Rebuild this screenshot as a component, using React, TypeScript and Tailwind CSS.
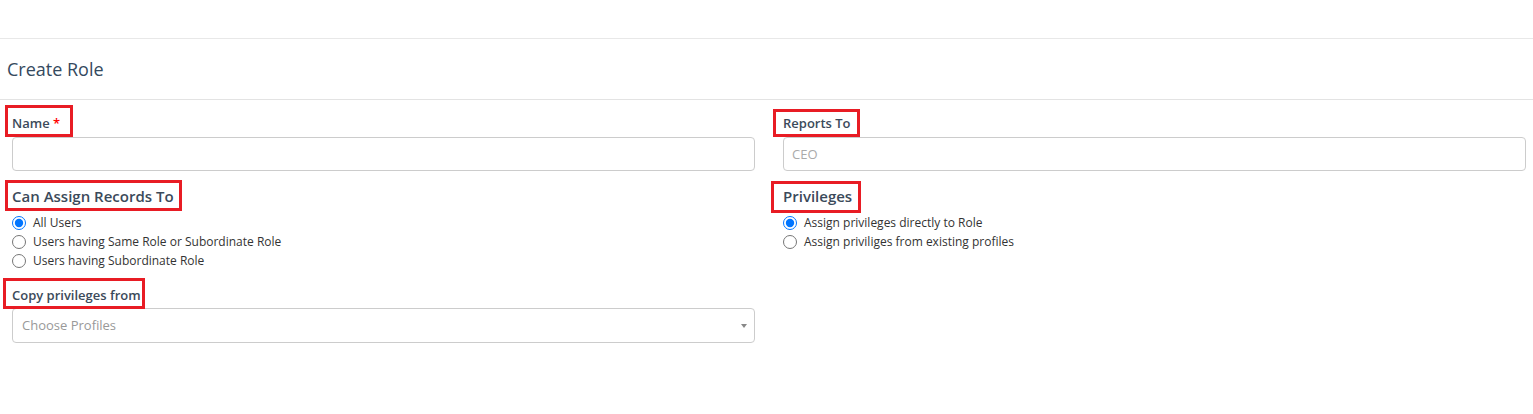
import React from 'react';

// red annotation box drawn over a label
function Marked({ box, children }: { box: string; children: React.ReactNode }) {
  return (
    <div className="relative w-fit">
      {children}
      <span className={`pointer-events-none absolute border-[3px] border-[#e81c24] ${box}`} />
    </div>
  );
}

function Radio({ label, checked }: { label: string; checked?: boolean }) {
  return (
    <label className="flex h-[19px] items-center gap-[7px] text-[12px] text-[#333]">
      <input type="radio" defaultChecked={checked} name={label} className="m-0 h-[14px] w-[14px]" />
      <span>{label}</span>
    </label>
  );
}

export default function App() {
  return (
    <div className="min-h-[414px] bg-white pt-[38px] font-['Open_Sans',sans-serif]">
      <div className="border-t border-[#e8e8e8]">
        {/* Header */}
        <div className="flex h-[61px] items-center border-b border-[#e3e3e3] px-[7px]">
          <h2 className="text-[18px] text-[#34495e]">Create Role</h2>
        </div>

        {/* Form */}
        <div className="grid grid-cols-2 gap-x-[28px] pt-[14px] pl-[12px] pr-[7px]">
          <div>
            <Marked box="-left-[7px] -top-[9px] w-[68px] h-[32px]">
              <div className="text-[13px] leading-[18px] font-semibold text-[#3b4a5a]">
                Name <span className="text-[#ff0000]">*</span>
              </div>
            </Marked>
            <input className="mt-[5px] block h-[34px] w-full rounded-[4px] border border-[#ccc] px-[9px] text-[13px] outline-none" />
          </div>
          <div>
            <Marked box="-left-[10px] -top-[5px] w-[87px] h-[28px]">
              <div className="text-[13px] leading-[18px] font-semibold text-[#3b4a5a]">Reports To</div>
            </Marked>
            <input
              placeholder="CEO"
              className="mt-[5px] block h-[34px] w-full rounded-[4px] border border-[#ccc] px-[8px] text-[13px] outline-none placeholder:text-[#aaa]"
            />
          </div>

          <div className="mt-[15px]">
            <Marked box="-left-[7px] -top-[6px] w-[177px] h-[31px]">
              <div className="text-[15px] leading-[20px] font-semibold text-[#3b4a5a]">Can Assign Records To</div>
            </Marked>
            <div className="mt-[7px] flex flex-col">
              <Radio label="All Users" checked />
              <Radio label="Users having Same Role or Subordinate Role" />
              <Radio label="Users having Subordinate Role" />
            </div>
          </div>
          <div className="mt-[15px]">
            <Marked box="-left-[12px] -top-[5px] w-[90px] h-[32px]">
              <div className="text-[15px] leading-[20px] font-semibold text-[#3b4a5a]">Privileges</div>
            </Marked>
            <div className="mt-[7px] flex flex-col">
              <Radio label="Assign privileges directly to Role" checked />
              <Radio label="Assign priviliges from existing profiles" />
            </div>
          </div>

          <div className="mt-[16px]">
            <Marked box="-left-[9px] -top-[8px] w-[142px] h-[31px]">
              <div className="text-[13px] leading-[18px] font-semibold text-[#3b4a5a]">Copy privileges from</div>
            </Marked>
            <div className="mt-[4px] flex h-[35px] w-full items-center justify-between rounded-[4px] border border-[#ccc] pl-[9px] pr-[7px]">
              <span className="text-[13px] text-[#999]">Choose Profiles</span>
              <span className="h-0 w-0 border-x-[3px] border-t-[4px] border-x-transparent border-t-[#888]" />
            </div>
          </div>
          <div />
        </div>
      </div>
    </div>
  );
}
